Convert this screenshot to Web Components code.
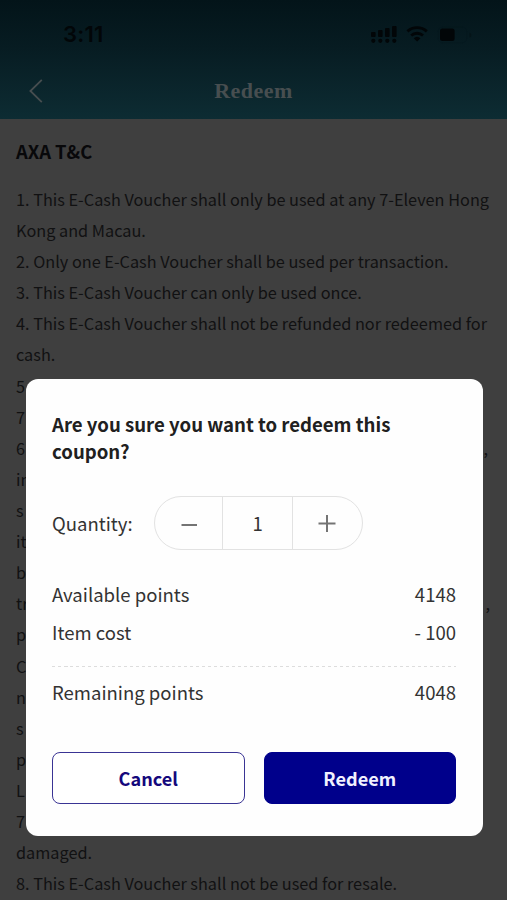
<!DOCTYPE html>
<html lang="en"><head><meta charset="utf-8"><title>Redeem</title>
<style>
html,body{margin:0;height:900px;overflow:hidden;background:#3f3f3f}
body{font-family:"Noto Sans CJK SC","Noto Sans",sans-serif;color:#111112}
</style></head><body>
<redeem-screen></redeem-screen>
<script>
const define=(name,html)=>customElements.define(name,class extends HTMLElement{
  constructor(){super();this.attachShadow({mode:'open'}).innerHTML=html;}
});

define('status-bar',`<style>
:host{display:flex;align-items:center;justify-content:space-between;height:68px;padding:0 32px 0 63px;box-sizing:border-box;color:#020608}
.time{font:600 22px/28px Inter,sans-serif;letter-spacing:.2px}
svg{display:block}
</style><span class="time">3:11</span>
<svg width="104" height="24" viewBox="0 0 104 24" fill="currentColor">
<g><rect x="0" y="10" width="4.6" height="5" rx="1"/><rect x="7" y="8" width="4.6" height="7" rx="1"/><rect x="14" y="6" width="4.6" height="9" rx="1"/><rect x="21" y="4" width="4.6" height="11" rx="1"/>
<circle cx="2.3" cy="18.8" r="2.1"/><circle cx="9.3" cy="18.8" r="2.1"/><circle cx="16.3" cy="18.8" r="2.1"/><circle cx="23.3" cy="18.8" r="2.1"/></g>
<g fill="none" stroke="currentColor" stroke-width="2.8"><path d="M36.4 9.4A14.3 14.3 0 0 1 55.8 9.4"/><path d="M40.2 13.5A8.8 8.8 0 0 1 52 13.5"/></g>
<path d="M42.7 16.2Q46.1 13.2 49.5 16.2L46.1 19.6Z"/>
<rect x="69" y="6.5" width="14.6" height="12.5" rx="2.5"/>
<rect x="67.2" y="5" width="28.5" height="15.8" rx="4.5" fill="none" stroke="currentColor" stroke-opacity=".08"/>
<path d="M98.4 10.5v5q2-.5 2-2.5t-2-2.5z" fill-opacity=".3"/></svg>`);

define('nav-bar',`<style>
:host{display:grid;grid-template-columns:1fr auto 1fr;align-items:center;height:46px;padding:0 29px;color:#474e50}
h1{margin:0;font:700 22px/28px "Liberation Serif",serif;letter-spacing:.5px}
svg{display:block}
</style><svg width="14" height="24" viewBox="0 0 14 24" fill="none" stroke="currentColor" stroke-width="1.8"><path d="M12.8.8 1.4 12 12.8 23.2"/></svg><h1><slot></slot></h1>`);

define('term-line',`<style>
:host{display:flex;justify-content:space-between;height:31.12px;font-size:16.28px;line-height:31.12px;white-space:nowrap}
</style><span><slot></slot></span><span><slot name="end"></slot></span>`);

define('terms-page',`<style>
:host{display:block;padding:16px 17px 0 16px}
h2{margin:0 0 16.9px;font-size:18.4px;line-height:32px;font-weight:700;color:#08080a}
.first{margin-right:2px}
</style><h2>AXA T&amp;C</h2>
<term-line>1. This E-Cash Voucher shall only be used at any 7-Eleven Hong</term-line>
<term-line>Kong and Macau.</term-line>
<term-line>2. Only one E-Cash Voucher shall be used per transaction.</term-line>
<term-line>3. This E-Cash Voucher can only be used once.</term-line>
<term-line>4. This E-Cash Voucher shall not be refunded nor redeemed for</term-line>
<term-line>cash.</term-line>
<term-line>5</term-line>
<term-line>7</term-line>
<term-line>6<span slot="end" class="first">,</span></term-line>
<term-line>in</term-line>
<term-line>s</term-line>
<term-line>it</term-line>
<term-line>b</term-line>
<term-line>tr<span slot="end">,</span></term-line>
<term-line>p</term-line>
<term-line>C</term-line>
<term-line>n</term-line>
<term-line>s</term-line>
<term-line>p</term-line>
<term-line>L</term-line>
<term-line>7</term-line>
<term-line>damaged.</term-line>
<term-line>8. This E-Cash Voucher shall not be used for resale.</term-line>`);

define('quantity-stepper',`<style>
:host{display:grid;grid-template-columns:67.5px 71px 67.5px;width:209px;height:54px;box-sizing:border-box;border:1.5px solid #e2e2e2;border-radius:27px}
div{display:grid;place-items:center;font-size:18.6px;line-height:28px}
.n{border:solid #e2e2e2;border-width:0 1.5px}
svg{display:block}
</style><div><svg width="18" height="18" stroke="#747474" stroke-width="2"><path d="M2.5 11h15.5"/></svg></div><div class="n"><slot></slot></div><div><svg width="18" height="18" stroke="#747474" stroke-width="2"><path d="M.5 9.5h17M9 1v17"/></svg></div>`);

define('point-row',`<style>
:host{display:flex;justify-content:space-between;height:37.5px;font-size:18.55px;line-height:37.5px}
</style><slot></slot><slot name="value"></slot>`);

define('action-button',`<style>
:host{display:grid;place-items:center;box-sizing:border-box;height:52px;border:1.5px solid #3a3494;border-radius:8px;font-size:18.1px;line-height:28px;font-weight:700;color:#14087c;background:#fff}
:host([primary]){background:#00008b;border-color:#00008b;color:#f0f0ff}
</style><slot></slot>`);

define('confirm-dialog',`<style>
:host{display:block;box-sizing:border-box;width:457px;height:457px;padding:31px 26.5px 0 26.5px;border-radius:12px;background:#fefefe;color:#333}
h2{margin:0;font-size:18.6px;line-height:27px;font-weight:700;color:#202020}
.qty{display:flex;align-items:center;justify-content:flex-start;gap:21px;margin-top:32px;font-size:18.55px}
.qty span{line-height:28px;padding-bottom:1px}
.points{margin-top:25px}
.rule{height:1px;margin:16px 0 6px;background:repeating-linear-gradient(90deg,#ddd 0 3.5px,transparent 3.5px 6px)}
.actions{display:grid;grid-template-columns:1fr 1fr;gap:19px;margin-top:41px}
</style><h2>Are you sure you want to redeem this coupon?</h2>
<div class="qty"><span>Quantity:</span><quantity-stepper>1</quantity-stepper></div>
<div class="points"><point-row>Available points<span slot="value">4148</span></point-row>
<point-row>Item cost<span slot="value">- 100</span></point-row>
<div class="rule"></div>
<point-row>Remaining points<span slot="value">4048</span></point-row></div>
<div class="actions"><action-button>Cancel</action-button><action-button primary>Redeem</action-button></div>`);

define('redeem-screen',`<style>
:host{display:block;position:relative;width:507px;height:900px;overflow:hidden}
header{height:119px;background:linear-gradient(#031419,#071c22 40%,#0d2c33)}
confirm-dialog{position:absolute;left:25.5px;top:379px}
</style><header><status-bar></status-bar><nav-bar>Redeem</nav-bar></header><terms-page></terms-page><confirm-dialog></confirm-dialog>`);
</script></body></html>
